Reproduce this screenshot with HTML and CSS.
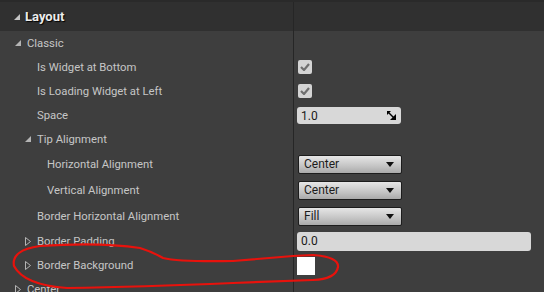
FILE: index.html
```html
<!DOCTYPE html>
<html lang="en">
<head>
    <meta charset="UTF-8">
    <title>Details - Layout</title>
    <link rel="stylesheet" href="styles.css">
</head>
<body>
    <div class="panel">
        <div class="topbar"></div>

        <!-- Category header -->
        <div class="row category">
            <div class="name">
                <span class="slot"><svg width="6" height="6" viewBox="0 0 6 6"><polygon points="6,0 6,6 0,6" fill="#c4c4c4"/></svg></span>
                Layout
            </div>
            <div class="value"></div>
        </div>

        <div class="row">
            <div class="name depth-0">
                <span class="slot"><svg width="6" height="6" viewBox="0 0 6 6"><polygon points="6,0 6,6 0,6" fill="#b4b4b4"/></svg></span>
                Classic
            </div>
            <div class="value"></div>
        </div>

        <div class="row">
            <div class="name depth-1"><span class="slot"></span>Is Widget at Bottom</div>
            <div class="value">
                <span class="checkbox"><svg width="10" height="8" viewBox="0 0 10 8"><polyline points="1,4 4,7 9,1" fill="none" stroke="#6f6f6f" stroke-width="2.2"/></svg></span>
            </div>
        </div>

        <div class="row">
            <div class="name depth-1"><span class="slot"></span>Is Loading Widget at Left</div>
            <div class="value">
                <span class="checkbox"><svg width="10" height="8" viewBox="0 0 10 8"><polyline points="1,4 4,7 9,1" fill="none" stroke="#6f6f6f" stroke-width="2.2"/></svg></span>
            </div>
        </div>

        <div class="row">
            <div class="name depth-1"><span class="slot"></span>Space</div>
            <div class="value">
                <div class="spinbox">
                    <span>1.0</span>
                    <svg width="9" height="9" viewBox="0 0 9 9"><polygon points="0,0 4,0 0,4" fill="#000"/><polygon points="9,9 9,3 3,9" fill="#000"/><polygon points="2,1 8,7 7,8 1,2" fill="#000"/></svg>
                </div>
            </div>
        </div>

        <div class="row">
            <div class="name depth-1">
                <span class="slot"><svg width="6" height="6" viewBox="0 0 6 6"><polygon points="6,0 6,6 0,6" fill="#b4b4b4"/></svg></span>
                Tip Alignment
            </div>
            <div class="value"></div>
        </div>

        <div class="row tall">
            <div class="name depth-2"><span class="slot"></span>Horizontal Alignment</div>
            <div class="value">
                <div class="combo"><span>Center</span><span class="caret"></span></div>
            </div>
        </div>

        <div class="row tall">
            <div class="name depth-2"><span class="slot"></span>Vertical Alignment</div>
            <div class="value">
                <div class="combo"><span>Center</span><span class="caret"></span></div>
            </div>
        </div>

        <div class="row tall">
            <div class="name depth-1"><span class="slot"></span>Border Horizontal Alignment</div>
            <div class="value">
                <div class="combo"><span>Fill</span><span class="caret"></span></div>
            </div>
        </div>

        <div class="row">
            <div class="name depth-1">
                <span class="slot"><svg width="6" height="9" viewBox="0 0 6 9"><polygon points="0.5,0.5 5.5,4.5 0.5,8.5" fill="none" stroke="#b4b4b4"/></svg></span>
                Border Padding
            </div>
            <div class="value">
                <div class="textbox">0.0</div>
            </div>
        </div>

        <div class="row">
            <div class="name depth-1">
                <span class="slot"><svg width="6" height="9" viewBox="0 0 6 9"><polygon points="0.5,0.5 5.5,4.5 0.5,8.5" fill="none" stroke="#b4b4b4"/></svg></span>
                Border Background
            </div>
            <div class="value">
                <span class="swatch"></span>
            </div>
        </div>

        <div class="row">
            <div class="name depth-0">
                <span class="slot"><svg width="6" height="9" viewBox="0 0 6 9"><polygon points="0.5,0.5 5.5,4.5 0.5,8.5" fill="none" stroke="#b4b4b4"/></svg></span>
                Center
            </div>
            <div class="value"></div>
        </div>

        <!-- hand-drawn red mark around Border Background -->
        <svg class="scribble" width="544" height="292" viewBox="0 0 544 292">
            <path d="M 293 256 L 313 255 Q 339 257 338 267 Q 336 279 313 280 L 233 283 Q 140 287 67 288 Q 24 285 14 266 Q 11 250 40 246 Q 100 242 140 248 Q 153 252 163 258 Q 180 262 233 261 Z"
                  fill="none" stroke="#e8120c" stroke-width="2.2" stroke-linejoin="round"/>
        </svg>
    </div>
</body>
</html>
```

FILE: styles.css
```css
/* General styles */
body {
    margin: 0;
    background-color: #3e3e3e;
    font-family: Roboto, "Liberation Sans", sans-serif;
    font-size: 11.3px;
    color: #c6c6c6;
    overflow: hidden;
}

.panel {
    position: relative;
    width: 544px;
    height: 292px;
    overflow: hidden;
}

.topbar {
    height: 2px;
    background-color: #2a2a2a;
}

/* Rows */
.row {
    display: flex;
    height: 24px;
}

.row.tall {
    height: 26px;
}

.row .name {
    width: 293px;
    box-sizing: border-box;
    flex: none;
    display: flex;
    align-items: center;
    white-space: nowrap;
}

.row .value {
    flex: 1;
    display: flex;
    align-items: center;
    padding-left: 3px;
    border-left: 1px solid #262626;
}

.slot {
    width: 12px;
    flex: none;
    display: flex;
    align-items: center;
}

.depth-0 { padding-left: 15px; }
.depth-1 { padding-left: 25px; }
.depth-2 { padding-left: 35px; }

/* Category header */
.row.category {
    height: 29px;
    background-color: #303030;
}

.category .name {
    padding-left: 14px;
    font-size: 13px;
    font-weight: bold;
    color: #ececec;
    text-shadow: 1px 1px 1px #000;
}

.category .slot {
    width: 11px;
}

/* Widgets */
.checkbox {
    width: 14px;
    height: 14px;
    margin-left: 1px;
    background-color: #d4d4d4;
    border-radius: 2px;
    display: flex;
    align-items: center;
    justify-content: center;
}

.spinbox {
    width: 104px;
    height: 17px;
    margin-top: 1px;
    padding: 0 5px 0 4px;
    box-sizing: border-box;
    background-color: #d8d8d8;
    border-radius: 3px;
    display: flex;
    align-items: center;
    justify-content: space-between;
    color: #1a1a1a;
    font-size: 12px;
}

.combo {
    width: 104px;
    height: 19px;
    margin-left: 1px;
    padding: 0 7px 0 5px;
    box-sizing: border-box;
    border: 1px solid #1c1c1c;
    border-radius: 2px;
    background: linear-gradient(#e6e6e6, #c4c4c4 60%, #a9a9a9);
    display: flex;
    align-items: center;
    justify-content: space-between;
    color: #1c1c1c;
    font-size: 12px;
}

.caret {
    width: 0;
    height: 0;
    border-left: 4px solid transparent;
    border-right: 4px solid transparent;
    border-top: 5px solid #111;
}

.textbox {
    width: 234px;
    height: 19px;
    padding-left: 4px;
    box-sizing: border-box;
    background-color: #d8d8d8;
    border-radius: 3px;
    display: flex;
    align-items: center;
    color: #1a1a1a;
    font-size: 12px;
}

.swatch {
    width: 18px;
    height: 18px;
    margin-top: 2px;
    background-color: #fff;
}

/* Annotation overlay */
.scribble {
    position: absolute;
    left: 0;
    top: 0;
    pointer-events: none;
}
```
